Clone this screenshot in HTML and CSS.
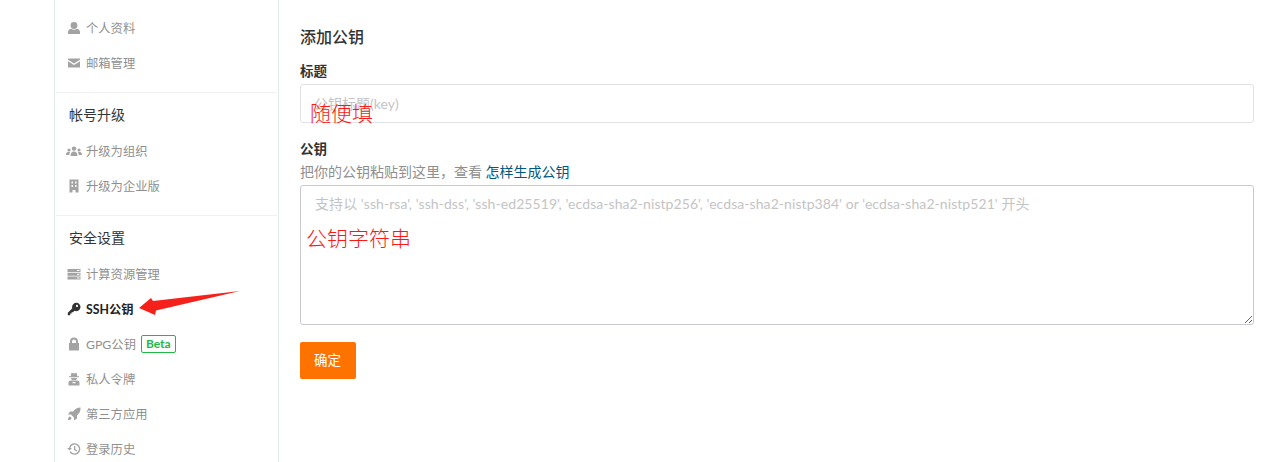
FILE: index.html
```html
<!DOCTYPE html>
<html lang="zh-CN">
<head>
    <meta charset="UTF-8">
    <title>添加公钥</title>
    <link rel="stylesheet" href="styles.css">
</head>
<body>
    <div class="page">
        <aside class="sidebar">
            <div class="group group-first">
                <a class="item"><svg class="icon" viewBox="0 0 14 14"><circle cx="7" cy="4.500" r="3.400"/><path d="M1 13v-2C1 9.300 2.600 8 4.200 7.800c.8.600 1.700.9 2.800.9s2-.3 2.800-.9C11.400 8 13 9.300 13 11v2z"/></svg>个人资料</a>
                <a class="item"><svg class="icon" viewBox="0 0 14 14"><path d="M1 2.500h12v1.300L7 7.600 1 3.800z"/><path d="M1 5.300 7 9l6-3.700v6.200H1z"/></svg>邮箱管理</a>
            </div>
            <div class="group">
                <h3 class="group-title">帐号升级</h3>
                <a class="item"><svg class="icon icon-wide" viewBox="0 0 16 14"><circle cx="8" cy="4.600" r="2.200"/><circle cx="3" cy="6" r="1.600"/><circle cx="13" cy="6" r="1.600"/><path d="M4.600 12c0-2.600 1-4.400 3.400-4.400s3.400 1.800 3.400 4.400z"/><path d="M0 11c0-1.800.6-3 2.200-3h2c-.6.800-.8 1.800-.9 3zM16 11c0-1.800-.6-3-2.200-3h-2c.6.800.8 1.800.9 3z"/></svg>升级为组织</a>
                <a class="item"><svg class="icon" viewBox="0 0 14 14"><path fill-rule="evenodd" d="M2.500.5h9v13H8.500v-2.500h-3v2.500h-3zM4.500 2.500V4.500h1.500V2.500zM8 2.500V4.500h1.500V2.500zM4.500 6v2h1.500V6zM8 6v2h1.500V6z"/></svg>升级为企业版</a>
            </div>
            <div class="group group-last">
                <h3 class="group-title">安全设置</h3>
                <a class="item"><svg class="icon" viewBox="0 0 14 14"><path fill-rule="evenodd" d="M.5 2h13v3H.5zM.5 5.700h13v3H.5zM.5 9.400h13v3H.5zM10 3v1h2.500V3zM10 6.700v1h2.500v-1zM10 10.400v1h2.500v-1z"/></svg>计算资源管理</a>
                <a class="item item-active"><svg class="icon" viewBox="0 0 14 14"><path fill-rule="evenodd" d="M9 .8a4.200 4.200 0 1 1-1.500 8L6 10.200H4.600v1.400H3.200V13.200H.8v-2.400l4.500-4.500A4.200 4.200 0 0 1 9 .8zm1 2a1.100 1.100 0 1 0 0 2.200A1.100 1.100 0 0 0 10 2.800z"/></svg>SSH公钥</a>
                <a class="item"><svg class="icon" viewBox="0 0 14 14"><path fill-rule="evenodd" d="M3 6V4.500a4 4 0 0 1 8 0V6h1v7.500H2V6zm2 0h4V4.500a2 2 0 0 0-4 0z"/></svg>GPG公钥<span class="badge">Beta</span></a>
                <a class="item"><svg class="icon" viewBox="0 0 14 14"><path d="M4.500.8 7 1.500 9.500.8l.9 3.400H12v1H2v-1h1.600z"/><path d="M4 6h6c0 1.200-.8 2-1.500 2h-3C4.800 8 4 7.200 4 6z"/><path fill-rule="evenodd" d="M1.500 13.500v-2.800C1.500 9.500 2.500 8.600 4 8.600h6c1.500 0 2.500.9 2.500 2.100v2.800zM5.500 10v1.200h3V10z"/></svg>私人令牌</a>
                <a class="item"><svg class="icon" viewBox="0 0 14 14"><path d="M13.500.5c.3 3.500-1 6-3.500 7.800v3.200l-3 2v-3L4 7.500H1l2-3h3.200C8 2 10.500.5 13.500.5z"/><path d="M2.500 9.500c1 0 2 1 2 2-.5 1-2 1.500-3.500 1.500 0-1.500.5-3 1.500-3.500z"/></svg>第三方应用</a>
                <a class="item"><svg class="icon" viewBox="0 0 14 14"><path d="M7.500 1.200a5.800 5.800 0 1 1-4.900 8.900l1.200-.8a4.400 4.400 0 1 0-.5-3.400h1.700L2.500 8.600.2 5.900H2a5.800 5.800 0 0 1 5.500-4.700z"/><path d="M7 4h1.300v3.200l2 1.300-.7 1L7 8z"/></svg>登录历史</a>
            </div>
        </aside>

        <main class="content">
            <h2 class="title">添加公钥</h2>
            <form class="key-form">
                <div class="field">
                    <label class="field-label" for="key-title">标题</label>
                    <input class="text-input" id="key-title" type="text" placeholder="公钥标题(key)">
                </div>
                <div class="field field-key">
                    <label class="field-label" for="key-body">公钥</label>
                    <p class="help">把你的公钥粘贴到这里，查看 <a class="help-link">怎样生成公钥</a></p>
                    <textarea class="text-area" id="key-body" placeholder="支持以 'ssh-rsa', 'ssh-dss', 'ssh-ed25519', 'ecdsa-sha2-nistp256', 'ecdsa-sha2-nistp384' or 'ecdsa-sha2-nistp521' 开头"></textarea>
                </div>
                <button class="submit" type="button">确定</button>
            </form>
        </main>
    </div>

    <!-- annotations drawn over the screenshot -->
    <span class="note note-title">随便填</span>
    <span class="note note-key">公钥字符串</span>
    <svg class="arrow" width="110" height="32" viewBox="0 0 110 32"><path d="M0 18 12 8 14 11 101 1 17 20.500 16 25z" fill="#f5221b"/></svg>
</body>
</html>
```

FILE: styles.css
```css
* {
    box-sizing: border-box;
}

html, body {
    height: 462px;
    overflow: hidden;
}

body {
    margin: 0;
    background-color: #fff;
    color: #333;
    font-family: Lato, "Noto Sans CJK SC", sans-serif;
    font-size: 14px;
}

.page {
    display: flex;
    height: 462px;
    padding-left: 54px;
}

.sidebar {
    flex: none;
    width: 225px;
    height: 462px;
    border-left: 1px solid #e3e9ed;
    border-right: 1px solid #e3e9ed;
    overflow: hidden;
}

.group {
    border-bottom: 1px solid #eef0f1;
    margin: 0 1px;
    padding: 4px 0 12px;
}

.group-first {
    padding-top: 10px;
    padding-bottom: 12px;
}

.group-last {
    border-bottom: 0;
}

.group-title {
    margin: 0;
    height: 36px;
    line-height: 36px;
    padding-left: 13px;
    font-size: 14px;
    font-weight: 400;
    color: #333;
}

.item {
    display: flex;
    align-items: center;
    height: 35px;
    padding-left: 11px;
    font-size: 12.300px;
    color: #8f8f8f;
    white-space: nowrap;
}

.item-active {
    color: #222;
    font-weight: 700;
}

.icon {
    flex: none;
    width: 14px;
    height: 14px;
    margin-right: 5px;
    fill: #a3a3a3;
}

.icon-wide {
    width: 16px;
    margin-left: -1px;
    margin-right: 4px;
}

.item-active .icon {
    fill: #333;
}

.badge {
    margin-left: 5px;
    padding: 0 4px;
    height: 18px;
    line-height: 16px;
    border: 1px solid #21ba45;
    border-radius: 2px;
    font-size: 12px;
    font-weight: 700;
    color: #21ba45;
}

.content {
    flex: 1;
    padding: 25px 22px 0 21px;
}

.title {
    margin: 0 0 14px;
    height: 23px;
    line-height: 23px;
    font-size: 16px;
    font-weight: 500;
    color: #333;
}

.field-label {
    display: block;
    height: 18px;
    line-height: 18px;
    font-size: 13.500px;
    font-weight: 700;
    color: #333;
}

.text-input {
    display: block;
    width: 100%;
    height: 39px;
    margin-top: 4px;
    padding: 0 13px;
    border: 1px solid #e0e2e8;
    border-radius: 3px;
    font: inherit;
    outline: 0;
}

.field-key {
    margin-top: 17px;
}

.help {
    margin: 5px 0 4px;
    line-height: 18px;
    color: #8f8f8f;
}

.help-link {
    color: #005980;
}

.text-area {
    display: block;
    width: 100%;
    height: 140px;
    padding: 9px 14px;
    border: 1px solid #c9c9d2;
    border-radius: 3px;
    font: inherit;
    letter-spacing: 0.07px;
    line-height: 18px;
    outline: 0;
}

::placeholder {
    color: #c4c4c4;
    opacity: 1;
}

.submit {
    display: block;
    width: 56px;
    height: 37px;
    margin-top: 17px;
    padding: 0 1px 3px 0;
    border: 0;
    border-radius: 2px;
    background-color: #fe7300;
    color: #fff;
    font: inherit;
    font-size: 13.500px;
}

/* red annotations on top of the page */
.note {
    position: absolute;
    color: #fa1a14;
    font-size: 21px;
    font-weight: 300;
    line-height: 28px;
    white-space: nowrap;
}

.note-title {
    left: 310px;
    top: 99px;
}

.note-key {
    left: 306px;
    top: 224px;
}

.arrow {
    position: absolute;
    left: 139px;
    top: 290px;
}
```
